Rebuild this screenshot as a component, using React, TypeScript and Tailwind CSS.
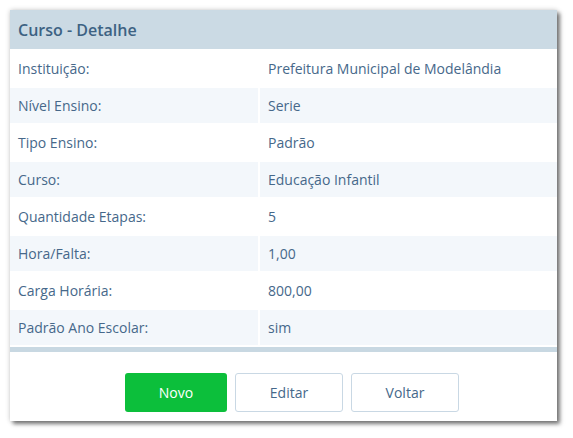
const rows: [string, string][] = [
  ["Instituição:", "Prefeitura Municipal de Modelândia"],
  ["Nível Ensino:", "Serie"],
  ["Tipo Ensino:", "Padrão"],
  ["Curso:", "Educação Infantil"],
  ["Quantidade Etapas:", "5"],
  ["Hora/Falta:", "1,00"],
  ["Carga Horária:", "800,00"],
  ["Padrão Ano Escolar:", "sim"],
]

export default function App() {
  return (
    <div className="min-h-screen bg-white pt-[10px] pl-[10px] font-['Open_Sans',sans-serif] text-[14px] text-[#46688a]">
      <div className="w-[547px] bg-white shadow-[0_0_5px_rgba(0,0,0,0.2),3px_3px_4px_rgba(0,0,0,0.5)]">
        {/* Header */}
        <div className="h-[39px] bg-[#cbdae4] px-2 flex items-center">
          <h2 className="text-[16px] font-semibold text-[#3d6283]">Curso - Detalhe</h2>
        </div>

        {/* Details */}
        <div>
          {rows.map(([label, value], index) => (
            <div key={label} className="pt-[2px]">
              <div
                className={
                  index % 2 === 1
                    ? "h-[35px] flex items-center bg-[#f3f7fb]"
                    : "h-[35px] flex items-center bg-white"
                }
              >
                <div className="w-[248px] px-2 h-full flex items-center">{label}</div>
                <div className="flex-1 h-full pl-2 flex items-center border-l-2 border-white">{value}</div>
              </div>
            </div>
          ))}
        </div>
        <div className="mt-[2px] h-[5px] bg-[#c8d8e2]" />

        {/* Actions */}
        <div className="pt-[21px] pb-[9px] pl-[115px] flex gap-[8px]">
          <button className="w-[102px] h-[39px] rounded-[3px] bg-[#0cbf3b] text-white">Novo</button>
          <button className="w-[108px] h-[39px] rounded-[3px] border border-[#c9d8e4] bg-white text-[#46688a]">
            Editar
          </button>
          <button className="w-[108px] h-[39px] rounded-[3px] border border-[#c9d8e4] bg-white text-[#46688a]">
            Voltar
          </button>
        </div>
      </div>
    </div>
  )
}
